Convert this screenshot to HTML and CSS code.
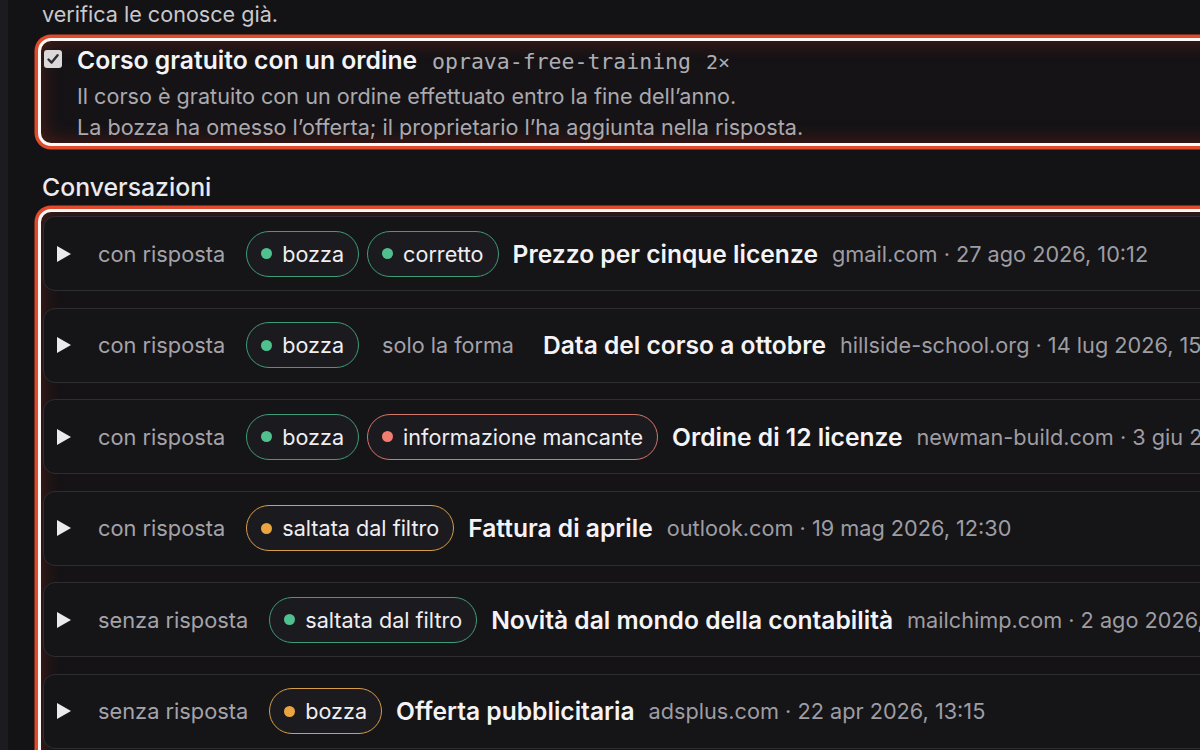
FILE: index.html
```html
<!DOCTYPE html>
<html lang="it">
<head>
<meta charset="utf-8">
<title>Conversazioni</title>
<link rel="stylesheet" href="styles.css">
</head>
<body>
<div class="page">
  <aside class="rail"></aside>
  <main class="main">
    <p class="intro">verifica le conosce già.</p>

    <section class="fact highlight">
      <span class="check" aria-hidden="true">
        <svg viewBox="0 0 18 18" width="18" height="18"><path d="M4.5 9.5 L7.6 12.6 L13.6 5.2" fill="none" stroke="#2f2d31" stroke-width="2.4" stroke-linecap="round" stroke-linejoin="round"/></svg>
      </span>
      <div class="fact-body">
        <div class="fact-head">
          <span class="fact-title">Corso gratuito con un ordine</span>
          <code class="fact-code">oprava-free-training</code>
          <span class="fact-count">2×</span>
        </div>
        <p class="fact-desc">Il corso è gratuito con un ordine effettuato entro la fine dell’anno.<br>La bozza ha omesso l’offerta; il proprietario l’ha aggiunta nella risposta.</p>
      </div>
    </section>

    <h2 class="section-title">Conversazioni</h2>

    <section class="convs highlight">
      <div class="row">
        <svg class="arrow" viewBox="0 0 14 16" width="14" height="16"><polygon points="0,0 14,8 0,16" fill="#ebeaee"/></svg>
        <span class="status">con risposta</span>
        <span class="tags">
          <span class="pill green"><i class="dot"></i>bozza</span>
          <span class="pill green"><i class="dot"></i>corretto</span>
        </span>
        <span class="title">Prezzo per cinque licenze</span>
        <span class="meta">gmail.com · 27 ago 2026, 10:12</span>
      </div>
      <div class="row">
        <svg class="arrow" viewBox="0 0 14 16" width="14" height="16"><polygon points="0,0 14,8 0,16" fill="#ebeaee"/></svg>
        <span class="status">con risposta</span>
        <span class="tags">
          <span class="pill green"><i class="dot"></i>bozza</span>
          <span class="pill plain">solo la forma</span>
        </span>
        <span class="title">Data del corso a ottobre</span>
        <span class="meta">hillside-school.org · 14 lug 2026, 15:40</span>
      </div>
      <div class="row">
        <svg class="arrow" viewBox="0 0 14 16" width="14" height="16"><polygon points="0,0 14,8 0,16" fill="#ebeaee"/></svg>
        <span class="status">con risposta</span>
        <span class="tags">
          <span class="pill green"><i class="dot"></i>bozza</span>
          <span class="pill red"><i class="dot"></i>informazione mancante</span>
        </span>
        <span class="title">Ordine di 12 licenze</span>
        <span class="meta">newman-build.com · 3 giu 2026, 09:05</span>
      </div>
      <div class="row">
        <svg class="arrow" viewBox="0 0 14 16" width="14" height="16"><polygon points="0,0 14,8 0,16" fill="#ebeaee"/></svg>
        <span class="status">con risposta</span>
        <span class="tags">
          <span class="pill amber"><i class="dot"></i>saltata dal filtro</span>
        </span>
        <span class="title">Fattura di aprile</span>
        <span class="meta">outlook.com · 19 mag 2026, 12:30</span>
      </div>
      <div class="row">
        <svg class="arrow" viewBox="0 0 14 16" width="14" height="16"><polygon points="0,0 14,8 0,16" fill="#ebeaee"/></svg>
        <span class="status">senza risposta</span>
        <span class="tags">
          <span class="pill green"><i class="dot"></i>saltata dal filtro</span>
        </span>
        <span class="title">Novità dal mondo della contabilità</span>
        <span class="meta">mailchimp.com · 2 ago 2026, 08:00</span>
      </div>
      <div class="row">
        <svg class="arrow" viewBox="0 0 14 16" width="14" height="16"><polygon points="0,0 14,8 0,16" fill="#ebeaee"/></svg>
        <span class="status">senza risposta</span>
        <span class="tags">
          <span class="pill amber"><i class="dot"></i>bozza</span>
        </span>
        <span class="title">Offerta pubblicitaria</span>
        <span class="meta">adsplus.com · 22 apr 2026, 13:15</span>
      </div>
    </section>
  </main>
</div>
</body>
</html>
```

FILE: styles.css
```css
* { box-sizing: border-box; }

html, body {
  margin: 0;
  padding: 0;
  background: #131215;
  overflow: hidden;
  height: 750px;
}

body {
  font-family: Inter, "Noto Sans", sans-serif;
  color: #ecebef;
}

.page {
  display: flex;
  width: 1500px;
  min-height: 750px;
}

.rail {
  width: 8px;
  flex: none;
  background: #1c1b1f;
}

.main {
  flex: none;
  width: 1460px;
  padding-left: 30px;
}

.intro {
  margin: 0 0 10px 4px;
  font-size: 21.6px;
  line-height: 28px;
  color: #c9c8cd;
}

.highlight {
  border: 3px solid #fbf8f6;
  border-radius: 13px;
  box-shadow: 0 0 0 3.5px #e14b2d, inset 0 0 20px rgba(170, 48, 28, 0.4);
  background: #151316;
}

.fact {
  display: flex;
  align-items: flex-start;
  padding: 4px 3px 0 3px;
}

.check {
  flex: none;
  width: 18px;
  height: 18px;
  margin-top: 5px;
  border-radius: 3px;
  background: #dcd8d9;
  display: flex;
}

.fact-body {
  margin-left: 15px;
}

.fact-head {
  display: flex;
  align-items: baseline;
  height: 30px;
  line-height: 30px;
}

.fact-title {
  font-size: 24.7px;
  font-weight: 600;
  color: #f4f3f6;
}

.fact-code {
  margin-left: 15px;
  font-family: "DejaVu Sans Mono", "Liberation Mono", monospace;
  font-size: 21.5px;
  color: #aeadb2;
}

.fact-count {
  margin-left: 15px;
  font-family: "DejaVu Sans Mono", "Liberation Mono", monospace;
  font-size: 20px;
  color: #aeadb2;
}

.fact-desc {
  margin: 6px 0 0;
  font-size: 21.6px;
  line-height: 31px;
  color: #aaa9ae;
}

.section-title {
  margin: 26px 0 7px 4px;
  font-size: 24.8px;
  line-height: 30px;
  font-weight: 500;
  color: #ebeaee;
}

.convs {
  display: flex;
  flex-direction: column;
  gap: 16.5px;
  padding: 4px 2px 40px 2px;
}

.row {
  display: flex;
  align-items: center;
  height: 75px;
  padding-left: 13px;
  border: 1px solid #2e2d32;
  border-radius: 12px;
  background: #151417;
  white-space: nowrap;
}

.arrow {
  flex: none;
  margin-right: 27px;
}

.status {
  font-size: 21.8px;
  color: #a4a3a9;
  margin-right: 21px;
}

.tags {
  display: flex;
  gap: 8px;
  margin-right: 14px;
}

.pill {
  display: inline-flex;
  align-items: center;
  height: 46px;
  padding: 0 14px 0 14px;
  border: 1.5px solid transparent;
  border-radius: 23px;
  background: #1b1a1e;
  font-size: 21.6px;
  color: #efeef2;
}

.pill .dot {
  width: 11px;
  height: 11px;
  border-radius: 50%;
  margin-right: 10px;
  flex: none;
}

.pill.green { border-color: #3f9c77; }
.pill.green .dot { background: #4fc08e; }

.pill.red { border-color: #d4776b; }
.pill.red .dot { background: #ef7d70; }

.pill.amber { border-color: #d79d48; }
.pill.amber .dot { background: #eaa540; }

.pill.plain {
  background: transparent;
  color: #a4a3a9;
}

.title {
  font-size: 24.6px;
  font-weight: 600;
  color: #f4f3f6;
  margin-right: 14px;
}

.meta {
  font-size: 21.7px;
  color: #9e9da3;
}
```
